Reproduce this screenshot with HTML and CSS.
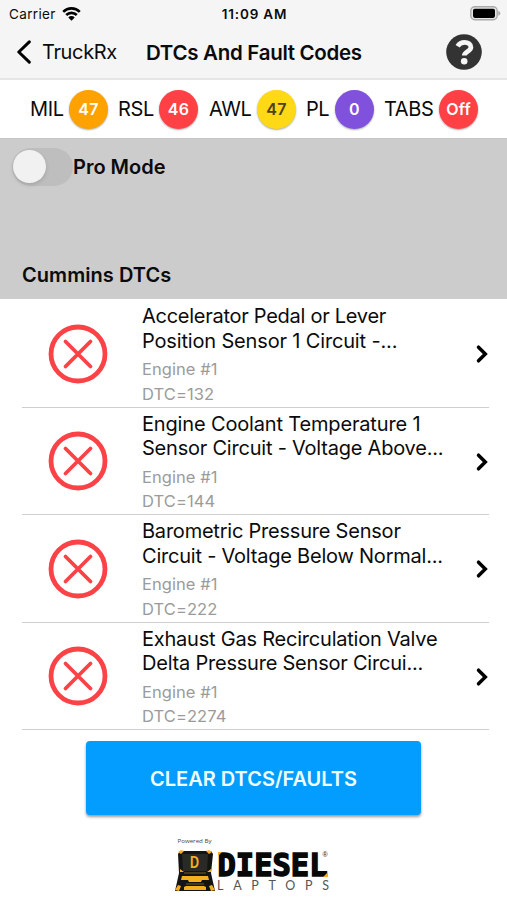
FILE: index.html
```html
<!DOCTYPE html>
<html lang="en">
<head>
<meta charset="utf-8">
<title>DTCs And Fault Codes</title>
<link rel="stylesheet" href="styles.css">
</head>
<body>
<svg class="defs" width="0" height="0" aria-hidden="true">
  <symbol id="fault" viewBox="0 0 60 60"><g fill="none" stroke="#fb4246"><circle cx="30" cy="30" r="27" stroke-width="4.8"/><path d="M17.500 17.500 42.500 42.500M42.500 17.500 17.500 42.500" stroke-width="3.8" stroke-linecap="round"/></g></symbol>
  <symbol id="next" viewBox="0 0 12 20"><path d="M2.500 3.200 9.300 10 2.500 16.800" fill="none" stroke="#000" stroke-width="3.5" stroke-linecap="round" stroke-linejoin="miter"/></symbol>
</svg>
<header class="header">
  <div class="status">
    <div class="carrier"><span>Carrier</span>
      <svg width="19" height="14" viewBox="0 0 19 14"><g fill="none" stroke="#000" stroke-width="2.6"><path d="M1.2 4.800a11.8 11.8 0 0 1 16.6 0"/><path d="M4.2 8a7.6 7.6 0 0 1 10.6 0"/></g><path d="M9.500 13.700 6.300 10.400a4.6 4.6 0 0 1 6.4 0z"/></svg>
    </div>
    <div class="time">11:09 AM</div>
    <svg class="battery" width="31" height="15" viewBox="0 0 31 15"><rect x=".8" y=".8" width="26.4" height="13" rx="4" fill="#e6e6e6" stroke="#aaa" stroke-width="1.4"/><rect x="3" y="2.700" width="22" height="9.200" rx="1.8"/><path d="M28.300 4.800q2 .8 2 2.5t-2 2.5z" fill="#aaa"/></svg>
  </div>
  <nav class="nav">
    <a class="back"><svg width="16" height="24" viewBox="0 0 16 24"><path d="M13.300 1.900 2.800 12l10.5 10.1" fill="none" stroke="#000" stroke-width="3" stroke-linecap="round" stroke-linejoin="round"/></svg><span>TruckRx</span></a>
    <h1 class="title">DTCs And Fault Codes</h1>
    <svg class="help" width="36" height="36" viewBox="0 0 36 36"><circle cx="18" cy="18" r="17.8" fill="#333"/><path d="M11.600 12.200C13.300 9.400 15.600 8.300 18.500 8.300c3.700 0 6.400 2.100 6.400 5 0 4.200-6.600 4.100-6.600 8.300" fill="none" stroke="#f5f5f5" stroke-width="4.800"/><circle cx="18.2" cy="27.300" r="3.3" fill="#f5f5f5"/></svg>
  </nav>
</header>
<section class="lamps">
  <span class="lamp mil">MIL</span><b class="badge orange">47</b>
  <span class="lamp rsl">RSL</span><b class="badge red">46</b>
  <span class="lamp awl">AWL</span><b class="badge yellow">47</b>
  <span class="lamp pl">PL</span><b class="badge purple">0</b>
  <span class="lamp tabs">TABS</span><b class="badge red">Off</b>
</section>
<section class="mode">
  <div class="pro"><span class="switch"><i class="knob"></i></span><span class="pro-label">Pro Mode</span></div>
  <h2 class="group">Cummins DTCs</h2>
</section>
<main class="list">
  <article class="row"><svg class="fault"><use href="#fault"/></svg><div class="text"><div class="name"><p class="tight">Accelerator Pedal or Lever</p><p class="loose">Position Sensor 1 Circuit -...</p></div><p class="sub">Engine #1</p><p class="sub code">DTC=132</p></div><svg class="next"><use href="#next"/></svg></article>
  <article class="row"><svg class="fault"><use href="#fault"/></svg><div class="text"><div class="name"><p class="loose">Engine Coolant Temperature 1</p><p>Sensor Circuit - Voltage Above...</p></div><p class="sub">Engine #1</p><p class="sub code">DTC=144</p></div><svg class="next"><use href="#next"/></svg></article>
  <article class="row"><svg class="fault"><use href="#fault"/></svg><div class="text"><div class="name"><p>Barometric Pressure Sensor</p><p>Circuit - Voltage Below Normal...</p></div><p class="sub">Engine #1</p><p class="sub code">DTC=222</p></div><svg class="next"><use href="#next"/></svg></article>
  <article class="row"><svg class="fault"><use href="#fault"/></svg><div class="text"><div class="name"><p>Exhaust Gas Recirculation Valve</p><p>Delta Pressure Sensor Circui...</p></div><p class="sub">Engine #1</p><p class="sub code">DTC=2274</p></div><svg class="next"><use href="#next"/></svg></article>
</main>
<footer class="footer">
  <button class="clear">CLEAR DTCS/FAULTS</button>
  <svg class="logo" width="160" height="58" viewBox="174 836 160 58">
    <text x="177.500" y="844" class="powered" textLength="34" lengthAdjust="spacingAndGlyphs">Powered By</text>
    <path d="M180 852h31l2 3-2 19 4 18h-40l4-18-1-19z" fill="#141414"/>
    <path d="M178 853l3-2 3 1-3 3zM212 853l-3-2-3 1 3 3zM180 870l4 3h-4zM211 870l-4 3h4z" fill="#f5ae20"/>
    <path d="M182 855h26l-1 17h-24z" fill="#292a25"/>
    <text x="190" y="869" class="emblem" textLength="9" lengthAdjust="spacingAndGlyphs">D</text>
    <path d="M182 877h26l1 4h-7l-1 2h-12l-1-2h-7zM175 891l3-5 3 1-2 5zM215 891l-3-5-3 1 2 5zM184 888l2-1h18l2 1v3h-22z" fill="#f5ae20"/>
    <path d="M184 874h22M186 885h18" stroke="#74601f" stroke-width="1"/>
    <text x="217.500" y="876.500" class="brand" textLength="110" lengthAdjust="spacingAndGlyphs">DIESEL</text>
    <path d="M218 857v-4h4zM328 873v5h-5z" fill="#f5ae20"/>
    <text x="322.500" y="858" class="reg">®</text>
    <text x="217" y="890.500" class="laptops" textLength="112">LAPTOPS</text>
  </svg>
</footer>
</body>
</html>
```
FILE: styles.css
```css
* { box-sizing: border-box; }
body { margin: 0; width: 507px; height: 900px; overflow: hidden; background: #fff; color: #0b0b0b; font-family: Inter, "Liberation Sans", sans-serif; }
h1, h2, p { margin: 0; white-space: nowrap; }
svg { display: block; flex: none; }
.defs { position: absolute; }
.header { height: 80px; background: #f5f5f5; border-bottom: 2px solid #e6e6e6; }
.status { height: 27px; display: grid; grid-template-columns: 1fr 1fr 1fr; align-items: center; padding: 0 6px 0 9px; font-size: 13.5px; }
.carrier { display: flex; align-items: center; gap: 6px; letter-spacing: .35px; }
.time { text-align: center; font-weight: 600; letter-spacing: .8px; padding-right: 1px; }
.battery { justify-self: end; }
.nav { height: 50px; display: flex; align-items: center; padding: 0 25px 0 16px; }
.back { display: flex; align-items: center; gap: 10px; width: 130px; font-size: 20px; letter-spacing: -.35px; }
.title { font-size: 20.5px; font-weight: 600; letter-spacing: -.3px; }
.help { margin-left: auto; }
.lamps { height: 58px; display: flex; align-items: center; padding-left: 30px; font-size: 20px; }
.lamp { letter-spacing: -.4px; white-space: nowrap; flex: none; }
.mil { width: 39px; }
.rsl { width: 41px; }
.awl { width: 48px; }
.pl { width: 29px; }
.tabs { width: 55px; }
.badge { flex: none; width: 39px; height: 39px; margin-right: 10px; border-radius: 50%; display: grid; place-items: center; color: #fff; font-size: 16px; font-weight: 600; letter-spacing: .2px; box-shadow: 0 1px 2px #0005; }
.rsl + .badge { margin-right: 11px; }
.orange { background: #ffa200; }
.red { background: #ff4145; }
.yellow { background: #ffd816; color: #4b421d; }
.purple { background: #8051dc; }
.mode { height: 161px; background: #ccc; padding: 9px 0 0 12px; border-top: 1px solid #c6c6c6; }
.pro { display: flex; align-items: center; height: 38px; }
.switch { width: 61px; height: 38px; border-radius: 19px; background: #bebebe; padding: 2px 1px; }
.knob { display: block; width: 33px; height: 33px; border-radius: 50%; background: #f1f1f1; box-shadow: 0 2px 4px #0002; }
.pro-label, .group { font-size: 20px; font-weight: 600; letter-spacing: 0; }
.pro-label { line-height: 24px; }
.group { margin: 77px 0 0 10px; line-height: 24px; letter-spacing: .05px; }
.list { padding: 1px 18px 0 22px; }
.row { height: 107.500px; display: flex; align-items: center; border-bottom: 1.500px solid #cfcfcf; }
.fault { width: 60px; height: 60px; margin: 1px 34px 0 26px; }
.text { width: 330px; height: 98px; font-size: 20px; }
.name { line-height: 24.500px; letter-spacing: -.22px; }
.tight { letter-spacing: -.27px; }
.loose { letter-spacing: -.16px; }
.sub { color: #9b9b9b; font-size: 16.500px; line-height: 24.500px; margin-top: 4px; letter-spacing: .05px; }
.code { margin-top: 0; letter-spacing: .1px; }
.next { width: 12px; height: 20px; margin: 2px 0 0 4px; }
.footer { display: flex; flex-direction: column; align-items: center; padding-top: 11px; }
.clear { width: 335px; height: 74px; border: 0; border-radius: 4px; background: #039cff; color: #f0ffff; font: 600 20px Inter, sans-serif; padding-top: 3px; box-shadow: 0 2px 3px #0006; }
.logo { margin-top: 20px; overflow: visible; }
.powered { font: 6px "Open Sans", sans-serif; fill: #444; }
.emblem { font: bold 16px "Liberation Sans", sans-serif; fill: #f5ae20; }
.brand { font: bold 32.5px "DejaVu Sans Mono", monospace; fill: #080808; stroke: #080808; stroke-width: 1.6px; }
.reg { font: 7px "Liberation Sans", sans-serif; fill: #222; }
.laptops { font: 12.5px Lato, sans-serif; fill: #555; }
```
